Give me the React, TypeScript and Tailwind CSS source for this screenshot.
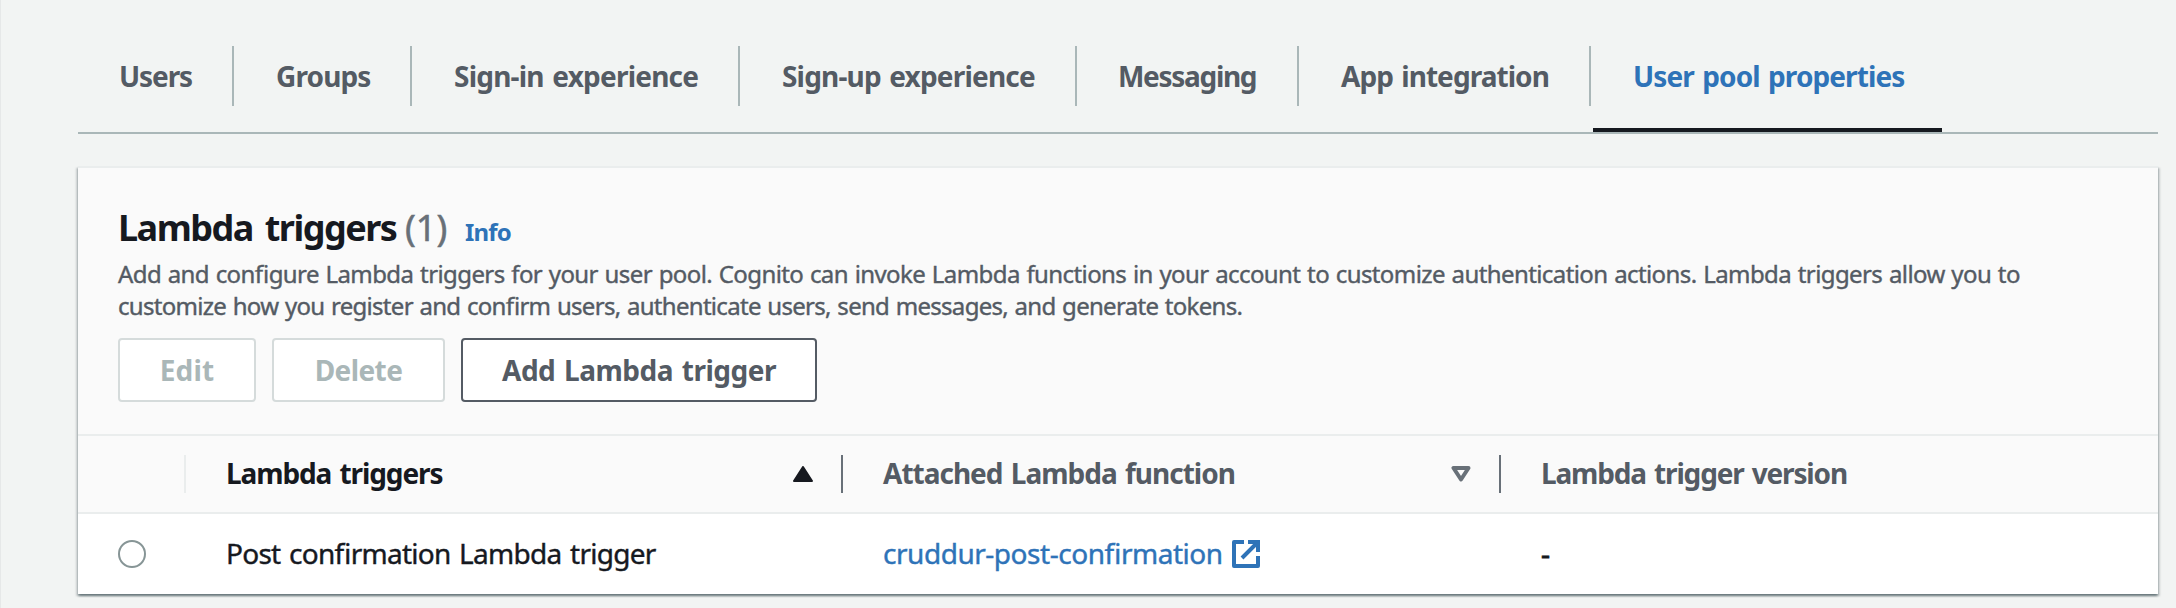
import type { ReactNode } from "react";

const tabs = [
  { label: "Users", box: "w-[156px] pl-[41px]", track: "tracking-[-1.1px]" },
  { label: "Groups", box: "w-[178px] pl-[42px]", track: "tracking-[-0.85px]" },
  { label: "Sign-in experience", box: "w-[328px] pl-[42px]", track: "tracking-[-0.78px]" },
  { label: "Sign-up experience", box: "w-[337px] pl-[42px]", track: "tracking-[-0.82px]" },
  { label: "Messaging", box: "w-[222px] pl-[41px]", track: "tracking-[-1.3px]" },
  { label: "App integration", box: "w-[292px] pl-[42px]", track: "tracking-[-0.95px]" },
];

function Tabs() {
  return (
    <nav className="flex h-[88px] border-b-2 border-[#aab7b8] font-bold text-[#545b64] [word-spacing:2px]">
      {tabs.map((t) => (
        <a key={t.label} className={`h-[60px] shrink-0 whitespace-nowrap border-r-2 border-[#aab7b8] leading-[60px] ${t.box} ${t.track}`}>
          {t.label}
        </a>
      ))}
      <a className="ml-0.5 h-[86px] w-[349px] shrink-0 whitespace-nowrap border-b-4 border-[#16191f] pl-10 leading-[60px] tracking-[-0.9px] text-[#2e73b8]">
        User pool properties
      </a>
    </nav>
  );
}

function Button({ className, children }: { className: string; children: ReactNode }) {
  return (
    <button className={`flex h-16 items-center justify-center whitespace-nowrap rounded-[4px] border-2 bg-white font-bold ${className}`}>
      {children}
    </button>
  );
}

function ExternalIcon() {
  return (
    <svg className="ml-[9px] size-7 shrink-0" viewBox="0 0 28 28" fill="none" stroke="currentColor" strokeWidth="4">
      <path d="M12 2H2v24h24V16" strokeLinejoin="round" />
      <path d="M16 2h10v10M25 3 10 18" />
    </svg>
  );
}

export default function App() {
  return (
    <div className="flex h-[608px] w-[2176px] flex-col overflow-hidden border-l border-[#e6e8e8] bg-[#f2f4f3] pl-[77px] pt-[46px] pr-[18px] font-['Noto_Sans',sans-serif] text-[28px] text-[#16191f] [font-feature-settings:'liga'_1]">
      <Tabs />
      <main className="mt-8 flex h-[428px] flex-col border-t-2 border-[#eaeded] bg-white shadow-[0_2px_2px_0_rgba(0,28,36,0.4),2px_2px_2px_0_rgba(0,28,36,0.15),-2px_2px_2px_0_rgba(0,28,36,0.15)]">
        <header className="h-[268px] border-b-2 border-[#eaeded] bg-[#fafafa] pl-10 pt-[35px]">
          <h2 className="flex h-[50px] items-baseline whitespace-nowrap leading-[50px]">
            <span className="w-[287px] text-[36px] font-bold tracking-[-1.5px] [word-spacing:4px]">Lambda triggers</span>
            <span className="w-[60px] text-[36px] text-[#687078] [-webkit-text-stroke:0.5px_#687078]">(1)</span>
            <a className="text-[24px] font-bold tracking-[-0.8px] text-[#2e73b8]">Info</a>
          </h2>
          <p className="mt-[5px] whitespace-nowrap text-[24px] leading-[32px] text-[#545b64] [-webkit-text-stroke:0.4px_#545b64] [word-spacing:1px]">
            <span className="block tracking-[-0.59px]">
              Add and configure Lambda triggers for your user pool. Cognito can invoke Lambda functions in your account to customize authentication actions. Lambda triggers allow you to
            </span>
            <span className="block tracking-[-0.7px]">
              customize how you register and confirm users, authenticate users, send messages, and generate tokens.
            </span>
          </p>
          <div className="mt-4 flex gap-4">
            <Button className="w-[138px] border-[#d5dbdb] tracking-[0.2px] text-[#aab7b8]">Edit</Button>
            <Button className="w-[173px] border-[#d5dbdb] tracking-[-0.6px] text-[#aab7b8]">Delete</Button>
            <Button className="w-[356px] border-[#545b64] tracking-[-0.5px] text-[#545b64] [word-spacing:2px]">Add Lambda trigger</Button>
          </div>
        </header>
        <div className="flex h-[78px] shrink-0 items-center border-b-2 border-[#eaeded] bg-[#fafafa] font-bold text-[#545b64] [word-spacing:2px]">
          <div className="h-[38px] w-[108px] shrink-0 border-r-2 border-[#eaeded]" />
          <div className="flex h-[38px] w-[657px] shrink-0 items-center justify-between border-r-2 border-[#687078] pl-10 pr-7 tracking-[-1.1px] text-[#16191f]">
            <span className="pb-0.5">Lambda triggers</span>
            <svg className="h-4 w-5" viewBox="0 0 20 16" fill="currentColor" stroke="currentColor" strokeWidth="2" strokeLinejoin="round">
              <path d="M10 1 19 15H1Z" />
            </svg>
          </div>
          <div className="flex h-[38px] w-[658px] shrink-0 items-center justify-between border-r-2 border-[#687078] pl-10 pr-7 tracking-[-1px]">
            <span className="pb-0.5">Attached Lambda function</span>
            <svg className="h-4 w-5" viewBox="0 0 20 16" fill="none" stroke="#687078" strokeWidth="4" strokeLinejoin="round">
              <path d="M2.5 2h15L10 13.5Z" />
            </svg>
          </div>
          <span className="pb-0.5 pl-10 tracking-[-1.16px]">Lambda trigger version</span>
        </div>
        <div className="flex h-20 items-center whitespace-nowrap">
          <span className="ml-10 size-7 shrink-0 rounded-full border-2 border-[#879596] bg-white" />
          <span className="ml-20 w-[657px] shrink-0 pb-0.5 tracking-[-0.73px] [-webkit-text-stroke:0.4px_#16191f] [word-spacing:2px]">Post confirmation Lambda trigger</span>
          <a className="flex w-[658px] shrink-0 items-center text-[#2e73b8]">
            <span className="pb-0.5 tracking-[-0.47px] [-webkit-text-stroke:0.4px_#2e73b8]">cruddur-post-confirmation</span>
            <ExternalIcon />
          </a>
          <span className="pb-0.5 [-webkit-text-stroke:0.8px_#16191f]">-</span>
        </div>
      </main>
    </div>
  );
}
